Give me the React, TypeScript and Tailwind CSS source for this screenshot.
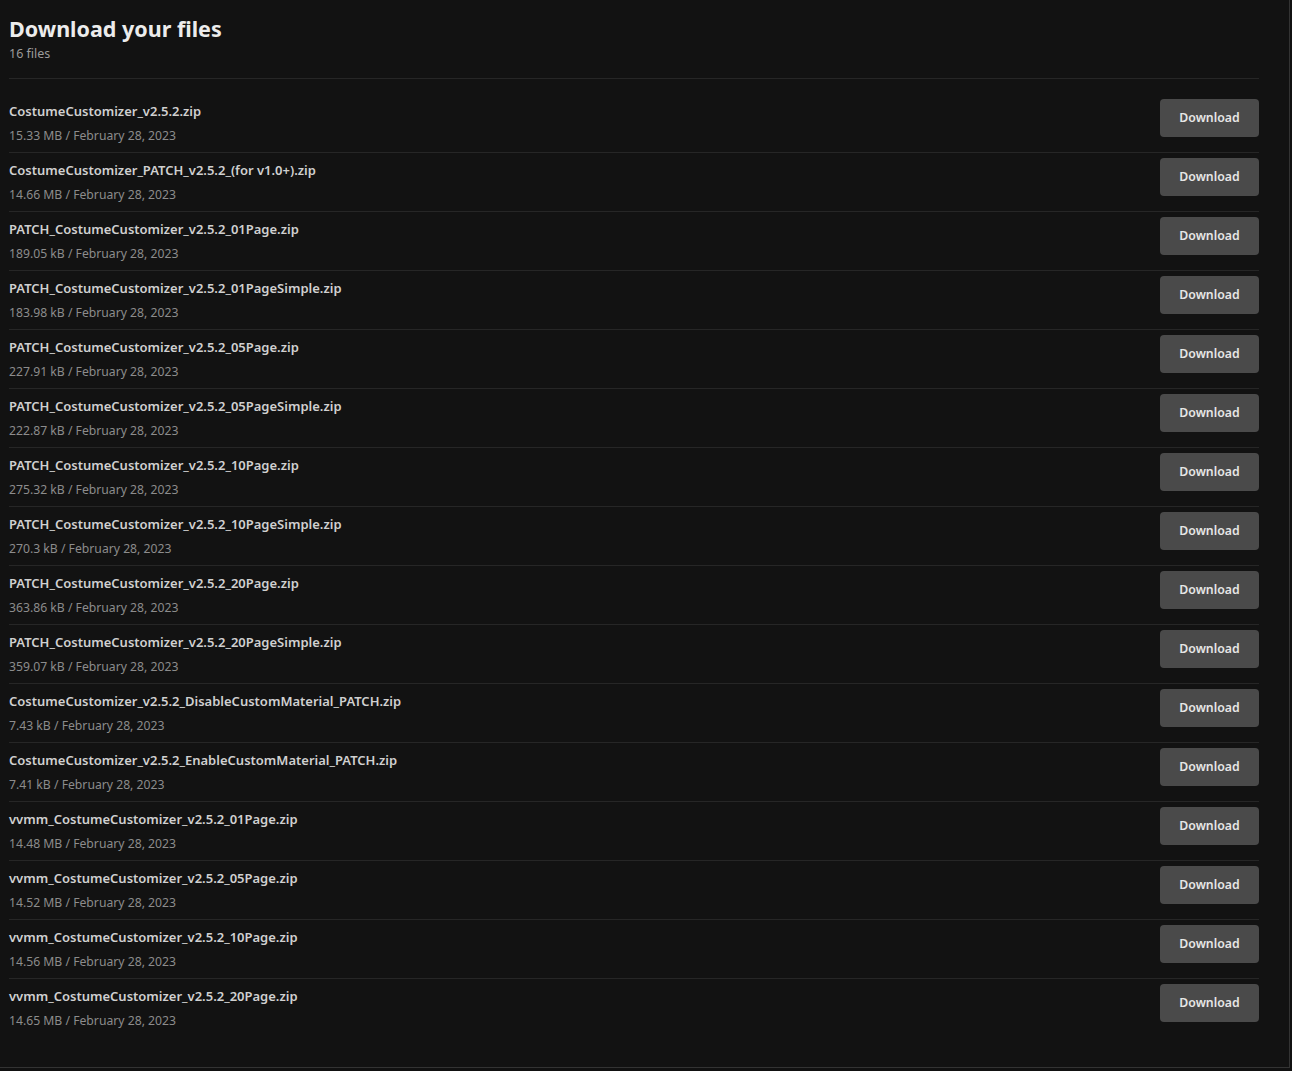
const files: [string, string][] = [
  ["CostumeCustomizer_v2.5.2.zip", "15.33 MB"],
  ["CostumeCustomizer_PATCH_v2.5.2_(for v1.0+).zip", "14.66 MB"],
  ["PATCH_CostumeCustomizer_v2.5.2_01Page.zip", "189.05 kB"],
  ["PATCH_CostumeCustomizer_v2.5.2_01PageSimple.zip", "183.98 kB"],
  ["PATCH_CostumeCustomizer_v2.5.2_05Page.zip", "227.91 kB"],
  ["PATCH_CostumeCustomizer_v2.5.2_05PageSimple.zip", "222.87 kB"],
  ["PATCH_CostumeCustomizer_v2.5.2_10Page.zip", "275.32 kB"],
  ["PATCH_CostumeCustomizer_v2.5.2_10PageSimple.zip", "270.3 kB"],
  ["PATCH_CostumeCustomizer_v2.5.2_20Page.zip", "363.86 kB"],
  ["PATCH_CostumeCustomizer_v2.5.2_20PageSimple.zip", "359.07 kB"],
  ["CostumeCustomizer_v2.5.2_DisableCustomMaterial_PATCH.zip", "7.43 kB"],
  ["CostumeCustomizer_v2.5.2_EnableCustomMaterial_PATCH.zip", "7.41 kB"],
  ["vvmm_CostumeCustomizer_v2.5.2_01Page.zip", "14.48 MB"],
  ["vvmm_CostumeCustomizer_v2.5.2_05Page.zip", "14.52 MB"],
  ["vvmm_CostumeCustomizer_v2.5.2_10Page.zip", "14.56 MB"],
  ["vvmm_CostumeCustomizer_v2.5.2_20Page.zip", "14.65 MB"],
];

export default function App() {
  return (
    <div className="min-h-screen bg-[#111111] font-['Noto_Sans','Open_Sans',sans-serif]">
      <div className="w-[1290px] h-[1068px] bg-[#121212] border-r border-b border-[#333333] pl-[9px]">
        <div className="w-[1250px]">
          <header className="h-[79px] border-b border-[#262626] pt-[15px]">
            <h1 className="text-[21.5px] leading-[28px] font-bold text-[#ececec]">Download your files</h1>
            <p className="mt-px text-[12.5px] leading-5 text-[#9b9b9b]">{files.length} files</p>
          </header>

          <ul className="mt-[15px]">
            {files.map(([name, size], i) => (
              <li
                key={name}
                className={`flex h-[59px] items-start justify-between pt-[5px] ${
                  i < files.length - 1 ? "border-b border-[#262626]" : ""
                }`}
              >
                <div className="mt-[2px]">
                  <div className="text-[13px] leading-5 font-semibold text-[#d0d0d0]">{name}</div>
                  <div className="mt-[5px] text-[12.2px] leading-5 text-[#8c8c8c]">
                    {size} / February 28, 2023
                  </div>
                </div>
                <button className="h-[38px] w-[99px] shrink-0 rounded-[4px] bg-[#4a4a4a] pt-px text-[12.3px] font-semibold text-[#e6e6e6]">
                  Download
                </button>
              </li>
            ))}
          </ul>
        </div>
      </div>
    </div>
  );
}
